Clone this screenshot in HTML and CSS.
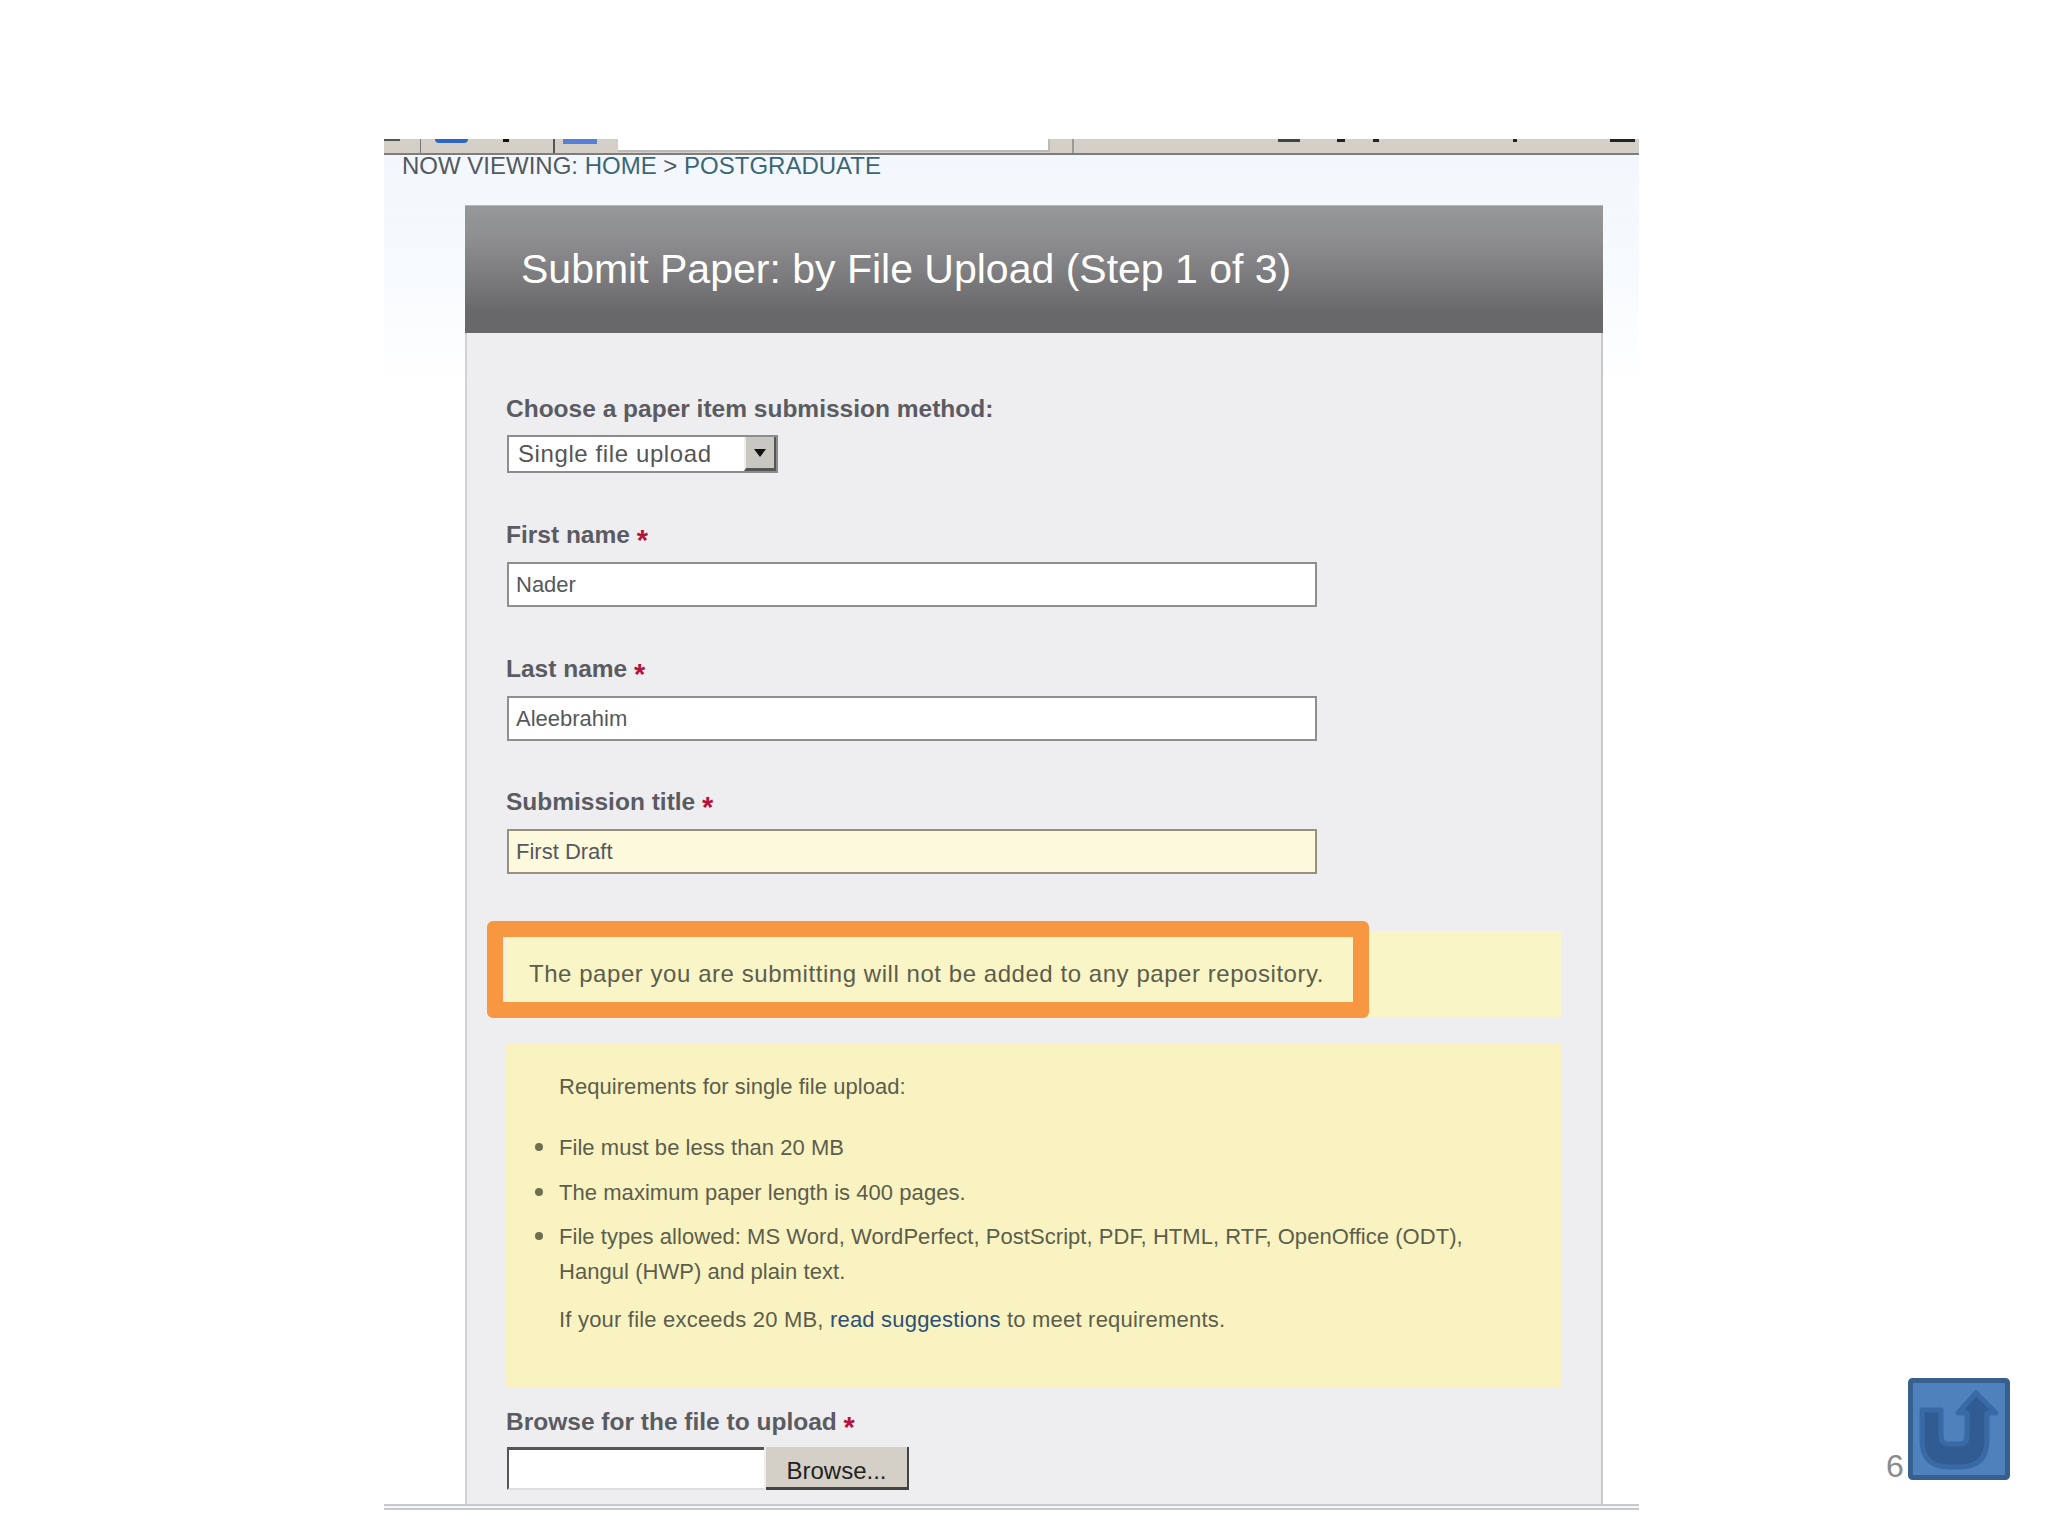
FILE: index.html
```html
<!DOCTYPE html>
<html>
<head>
  <meta charset="UTF-8">
  <title>Submit Paper</title>
  <link rel="stylesheet" href="styles.css">
</head>
<body>
  <div class="slide">
    <div class="toolbar">
      <span class="tb-dash"></span>
      <span class="tb-sep"></span>
      <span class="tb-blue"></span>
      <span class="tb-dot"></span>
      <span class="tb-sep2"></span>
      <span class="tb-blue2"></span>
      <span class="tb-address"></span>
      <span class="tb-sep3"></span>
      <span class="tb-dash2"></span>
      <span class="tb-dot2"></span>
      <span class="tb-dot3"></span>
      <span class="tb-dot4"></span>
      <span class="tb-dash3"></span>
    </div>
    <div class="breadcrumb">NOW VIEWING: <a>HOME</a> &gt; <a>POSTGRADUATE</a></div>

    <div class="panel">
      <h1 class="panel-head">Submit Paper: by File Upload (Step 1 of 3)</h1>
      <div class="panel-body">
        <div class="method">
          <label class="label">Choose a paper item submission method:</label>
          <div class="select">
            <span class="select-text">Single file upload</span>
            <span class="select-btn"><svg width="14" height="10" viewBox="0 0 14 10"><path d="M1 1h12L7 9z" fill="#111"/></svg></span>
          </div>
        </div>

        <div class="field">
          <label class="label">First name <span class="req">*</span></label>
          <div class="input">Nader</div>
        </div>
        <div class="field">
          <label class="label">Last name <span class="req">*</span></label>
          <div class="input">Aleebrahim</div>
        </div>
        <div class="field">
          <label class="label">Submission title <span class="req">*</span></label>
          <div class="input input-active">First Draft</div>
        </div>

        <div class="notice">
          The paper you are submitting will not be added to any paper repository.
          <div class="highlight"></div>
        </div>

        <div class="reqs">
          <p>Requirements for single file upload:</p>
          <ul>
            <li>File must be less than 20 MB</li>
            <li>The maximum paper length is 400 pages.</li>
            <li>File types allowed: MS Word, WordPerfect, PostScript, PDF, HTML, RTF, OpenOffice (ODT), Hangul (HWP) and plain text.</li>
          </ul>
          <p class="reqs-last">If your file exceeds 20 MB, <a>read suggestions</a> to meet requirements.</p>
        </div>

        <label class="label browse-label">Browse for the file to upload <span class="req">*</span></label>
        <div class="file-row">
          <div class="file-input"></div>
          <button class="browse-btn">Browse...</button>
        </div>
      </div>
    </div>

    <div class="slide-foot">
      <span class="page-num">6</span>
      <svg class="return-btn" width="102" height="102" viewBox="0 0 102 102">
        <rect x="2.5" y="2.5" width="97" height="97" rx="2" fill="#4f81bd" stroke="#37608f" stroke-width="5"/>
        <path d="M14 32H33V58Q33 66 41 66H52Q59 66 59 58V35H50L68 15 88 35H79V62Q79 89 52 89H41Q14 89 14 62Z" fill="#305c93" stroke="#3a6aa5" stroke-width="5" stroke-linejoin="round"/>
      </svg>
    </div>
  </div>
</body>
</html>
```

FILE: styles.css
```css
* { box-sizing: border-box; }
html, body {
  margin: 0; padding: 0;
  background: white;
  font-family: 'Liberation Sans', Arial, sans-serif;
  height: 100%;
  overflow: hidden;
}
.slide {
  display: flex;
  flex-direction: column;
  width: 1255px;
  height: 1371px;
  margin: 139px 0 0 384px;
  background: linear-gradient(#f1f7fd 0, #f5f9fd 100px, #ffffff 250px);
  border-bottom: 6px double #c9c9c9;
}

/* cut off browser toolbar */
.toolbar {
  display: flex;
  align-items: flex-start;
  flex: none;
  height: 16px;
  background: #d4d0c8;
  border-bottom: 2px solid #7d7d7d;
}
.tb-dash { width: 16px; height: 2px; background: #555; }
.tb-sep { width: 1px; height: 14px; margin-left: 20px; background: #777; }
.tb-blue { width: 33px; height: 4px; margin-left: 14px; background: #2f66c4; border-radius: 0 0 8px 8px; }
.tb-dot { width: 6px; height: 3px; margin-left: 35px; background: #111; }
.tb-sep2 { width: 2px; height: 14px; margin-left: 44px; background: #555; }
.tb-blue2 { width: 34px; height: 5px; margin-left: 8px; background: #5a7fd6; }
.tb-address { width: 432px; height: 13px; margin-left: 21px; background: white; border-bottom: 2px solid #bbb; border-right: 2px solid #bbb; }
.tb-sep3 { width: 2px; height: 14px; margin-left: 22px; background: #999; }
.tb-dash2 { width: 22px; height: 3px; margin-left: 204px; background: #444; }
.tb-dot2 { width: 8px; height: 3px; margin-left: 37px; background: #222; }
.tb-dot3 { width: 6px; height: 3px; margin-left: 28px; background: #222; }
.tb-dot4 { width: 4px; height: 3px; margin-left: 134px; background: #222; }
.tb-dash3 { width: 25px; height: 3px; margin-left: 93px; background: #222; }

.breadcrumb {
  flex: none;
  padding-left: 18px;
  margin-bottom: 28px;
  font-size: 24px;
  line-height: 22px;
  color: #55585c;
}
.breadcrumb a { color: #3d6675; }

.panel {
  display: flex;
  flex-direction: column;
  flex: 1;
  min-height: 0;
  width: 1138px;
  margin-left: 81px;
}
.panel-head {
  flex: none;
  height: 128px;
  margin: 0;
  padding-left: 56px;
  background: linear-gradient(#96989a, #8c8c8e 30%, #68676a 85%);
  border-top: 1px solid #b4b8b8;
  color: white;
  font-size: 41px;
  font-weight: normal;
  line-height: 127px;
}
.panel-body {
  flex: 1;
  padding: 61px 40px 0 39px;
  background: #eeeef0;
  border-left: 2px solid #d2d2d6;
  border-right: 2px solid #c8c8cc;
}

.label {
  display: block;
  height: 30px;
  font-size: 24.5px;
  font-weight: bold;
  line-height: 30px;
  color: #5b5b62;
}
.req {
  color: #b5123c;
  font-size: 29px;
  line-height: 1;
  vertical-align: -7px;
}

.select {
  display: flex;
  width: 271px;
  height: 38px;
  margin: 11px 0 0 1px;
  background: white;
  border: 2px solid #8c8c8c;
}
.select-text {
  flex: 1;
  padding-left: 9px;
  font-size: 24px;
  line-height: 34px;
  letter-spacing: 0.6px;
  color: #555;
}
.select-btn {
  display: flex;
  align-items: center;
  justify-content: center;
  width: 32px;
  background: #c9c7c2;
  border-left: 2px solid #eee;
  border-bottom: 3px solid #555;
  border-right: 2px solid #555;
}

.field { margin-top: 47px; }
.field + .field { margin-top: 46.5px; }
.input {
  width: 810px;
  height: 45px;
  margin: 12px 0 0 1px;
  padding-left: 7px;
  background: white;
  border: 2px solid #8f8f8f;
  font-size: 22px;
  line-height: 41px;
  color: #55585c;
}
.input-active { background: #fdf9dc; border-color: #93917f; }

.notice {
  position: relative;
  height: 86px;
  width: 1055px;
  margin-top: 57px;
  padding-left: 23px;
  background: #f9f5c6;
  font-size: 24px;
  line-height: 86px;
  letter-spacing: 0.55px;
  color: #5d5d4c;
}
.highlight {
  position: absolute;
  left: -19px;
  top: -10px;
  width: 882px;
  height: 97px;
  border: 16px solid #f79741;
  border-radius: 6px;
}

.reqs {
  width: 1055px;
  height: 344px;
  margin-top: 26px;
  padding: 26px 60px 0 53px;
  background: #f9f3c2;
  font-size: 22px;
  line-height: 35px;
  letter-spacing: 0.05px;
  color: #5d5d4c;
}
.reqs p { margin: 0; }
.reqs .reqs-last { letter-spacing: 0.2px; }
.reqs a { color: #2e4f78; }
.reqs ul {
  margin: 26px 0 13px;
  padding: 0;
  list-style: none;
}
.reqs li {
  position: relative;
  margin-bottom: 9.5px;
}
.reqs li:last-child { margin-bottom: 0; }
.reqs li::before {
  content: '';
  position: absolute;
  left: -24px;
  top: 13px;
  width: 8px;
  height: 8px;
  border-radius: 50%;
  background: #6e6e50;
}

.browse-label { margin-top: 20px; }
.file-row {
  display: flex;
  margin: 10px 0 0 1px;
}
.file-input {
  width: 257px;
  height: 43px;
  background: white;
  border-top: 3px solid #555;
  border-left: 2px solid #555;
  border-bottom: 2px solid #ddd;
}
.browse-btn {
  width: 143px;
  height: 43px;
  margin-left: 2px;
  padding: 8px 0 0;
  background: #d4d0c8;
  border: none;
  border-right: 2px solid #444;
  border-bottom: 3px solid #444;
  font-family: 'Liberation Sans', Arial, sans-serif;
  font-size: 24px;
  color: #222;
}

.slide-foot {
  position: absolute;
  left: 1886px;
  top: 1378px;
  display: flex;
  align-items: flex-end;
}
.page-num {
  width: 22px;
  margin-bottom: -2px;
  font-size: 32px;
  line-height: 32px;
  color: #8a8a8a;
}
.return-btn { display: block; }
```
